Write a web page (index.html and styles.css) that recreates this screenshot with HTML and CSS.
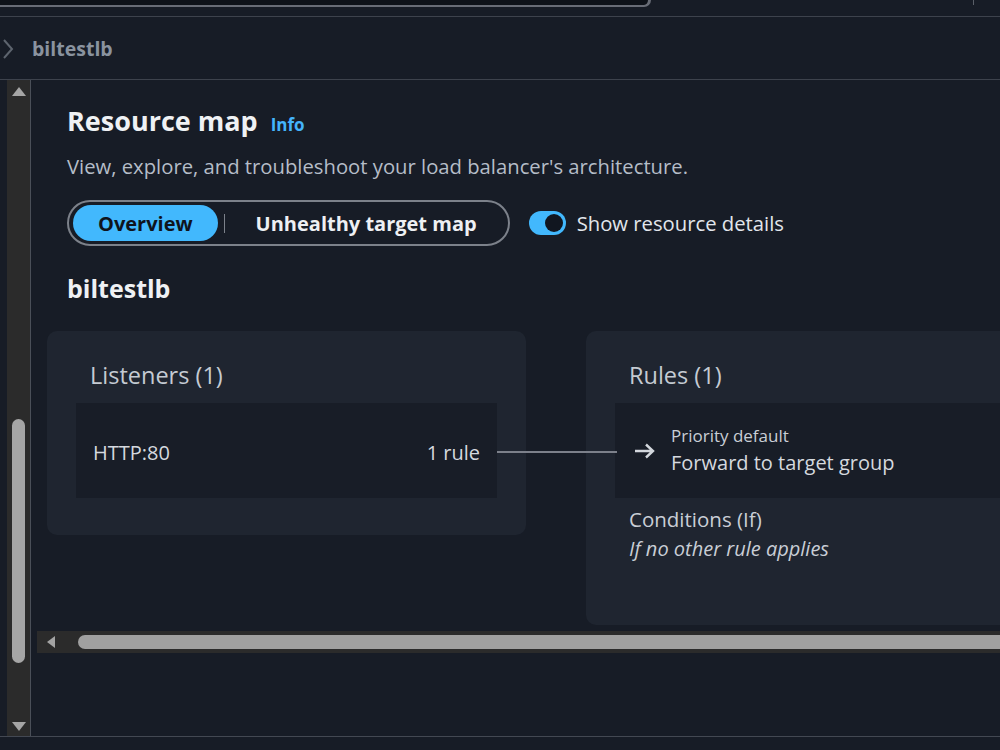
FILE: index.html
```html
<!DOCTYPE html>
<html lang="en">
<head>
    <meta charset="UTF-8">
    <meta name="viewport" content="width=device-width, initial-scale=1.0">
    <title>Resource map - biltestlb</title>
    <link rel="stylesheet" href="styles.css">
</head>
<body>
    <div class="topbar">
        <div class="search-edge"></div>
        <div class="topbar-tick"></div>
    </div>
    <div class="crumb">
        <svg class="crumb-chevron" width="14" height="20" viewBox="0 0 14 20">
            <polyline points="3,1 11,10 3,19" fill="none" stroke="#5d646e" stroke-width="2"/>
        </svg>
        <span class="crumb-name">biltestlb</span>
    </div>
    <div class="main">
        <!-- fake scrollbar of the split panel -->
        <div class="vscroll">
            <div class="vscroll-btn"><span class="tri tri-up"></span></div>
            <div class="vscroll-track"><div class="vscroll-thumb"></div></div>
            <div class="vscroll-btn"><span class="tri tri-down"></span></div>
        </div>
        <div class="content">
            <div class="page-head">
                <h1>Resource map</h1>
                <a class="info-link" href="#">Info</a>
            </div>
            <p class="subtitle">View, explore, and troubleshoot your load balancer's architecture.</p>
            <div class="controls">
                <div class="segmented">
                    <button class="seg seg-active">Overview</button>
                    <span class="seg-divider"></span>
                    <button class="seg">Unhealthy target map</button>
                </div>
                <label class="toggle">
                    <span class="switch"><span class="knob"></span></span>
                    <span>Show resource details</span>
                </label>
            </div>
            <h2 class="lb-name">biltestlb</h2>
            <div class="canvas">
                <div class="nodes">
                    <section class="node node-listeners">
                        <h3>Listeners (1)</h3>
                        <div class="node-row listener-row">
                            <span>HTTP:80</span>
                            <span>1 rule</span>
                        </div>
                    </section>
                    <section class="node node-rules">
                        <h3>Rules (1)</h3>
                        <div class="node-row rule-row">
                            <svg class="rule-arrow" width="22" height="16" viewBox="0 0 22 16">
                                <path d="M1 8 H19 M12 1.5 L19 8 L12 14.5" fill="none" stroke="#d3d7dd" stroke-width="2.4"/>
                            </svg>
                            <div>
                                <div class="rule-priority">Priority default</div>
                                <div class="rule-action">Forward to target group</div>
                            </div>
                        </div>
                        <div class="conditions">
                            <div class="conditions-title">Conditions (If)</div>
                            <div class="conditions-text">If no other rule applies</div>
                        </div>
                    </section>
                </div>
            </div>
            <div class="hscroll">
                <div class="hscroll-btn"><span class="tri tri-left"></span></div>
                <div class="hscroll-thumb"></div>
            </div>
        </div>
    </div>
</body>
</html>
```

FILE: styles.css
```css
body {
    margin: 0;
    background-color: #171c26;
    font-family: "Open Sans", "Noto Sans", sans-serif;
    color: #d5d9df;
    overflow: hidden;
    height: 750px;
}
.topbar {
    height: 16px;
    border-bottom: 1px solid #3d424c;
    position: relative;
}
.search-edge {
    width: 648px;
    height: 5px;
    background-color: #0e1219;
    border-right: 3px solid #686c76;
    border-bottom: 2px solid #686c76;
    border-bottom-right-radius: 9px;
}
.topbar-tick {
    position: absolute;
    left: 973px;
    top: 0;
    width: 1px;
    height: 5px;
    background-color: #5a5f68;
}
.crumb {
    height: 63px;
    border-bottom: 1px solid #3d424c;
    display: flex;
    align-items: center;
    box-sizing: border-box;
    padding-top: 1px;
}
.crumb-chevron {
    margin-left: 1px;
    margin-top: 1px;
}
.crumb-name {
    margin-left: 17px;
    font-size: 19.5px;
    font-weight: 700;
    color: #8a939f;
    line-height: 26px;
}
.main {
    display: flex;
    height: 656px;
    border-bottom: 1px solid #434852;
}
.vscroll {
    margin-left: 7px;
    width: 23px;
    background-color: #2b2b2b;
    border-right: 1px solid #4a4f58;
    display: flex;
    flex-direction: column;
}
.vscroll-btn {
    height: 20px;
    display: flex;
    align-items: center;
    justify-content: center;
}
.vscroll-track {
    flex: 1;
    padding-top: 319px;
}
.vscroll-thumb {
    width: 13px;
    height: 244px;
    margin-left: 5px;
    border-radius: 7px;
    background-color: #a6a6a6;
}
.tri {
    width: 0;
    height: 0;
    display: block;
}
.tri-up {
    border-left: 7px solid transparent;
    border-right: 7px solid transparent;
    border-bottom: 9px solid #a5a5a5;
    margin-top: 2px;
}
.tri-down {
    border-left: 7px solid transparent;
    border-right: 7px solid transparent;
    border-top: 9px solid #a5a5a5;
}
.tri-left {
    border-top: 6px solid transparent;
    border-bottom: 6px solid transparent;
    border-right: 8px solid #a3a3a3;
}
.content {
    flex: 1;
    min-width: 0;
    padding-top: 24px;
}
.page-head {
    display: flex;
    align-items: baseline;
    padding-left: 36px;
}
.page-head h1 {
    margin: 0;
    font-size: 27px;
    line-height: 34px;
    font-weight: 700;
    color: #eff1f4;
}
.info-link {
    margin-left: 13px;
    font-size: 17px;
    font-weight: 700;
    color: #44b4fc;
    text-decoration: none;
}
.subtitle {
    margin: 14px 0 0;
    padding-left: 36px;
    font-size: 20.25px;
    line-height: 28px;
    color: #b5bdc8;
}
.controls {
    display: flex;
    align-items: center;
    margin-top: 20px;
    padding-left: 36px;
}
.segmented {
    display: flex;
    align-items: center;
    border: 2px solid #7c818a;
    border-radius: 24px;
    padding: 3px 4px;
}
.seg {
    font-family: inherit;
    font-size: 20px;
    font-weight: 700;
    height: 36px;
    padding: 0 25px;
    border: none;
    border-radius: 18px;
    background: none;
    color: #eef0f3;
    cursor: pointer;
}
.seg + .seg-divider + .seg {
    padding-right: 27px;
}
.seg-active {
    background-color: #42b8fd;
    color: #0f141c;
}
.seg-divider {
    width: 1px;
    height: 19px;
    margin: 0 6px;
    background-color: #7c818a;
}
.toggle {
    display: flex;
    align-items: center;
    margin-left: 19px;
    font-size: 20.25px;
    color: #e2e6ec;
}
.switch {
    position: relative;
    width: 37px;
    height: 24px;
    border-radius: 12px;
    background-color: #42b8fd;
    margin-right: 11px;
}
.knob {
    position: absolute;
    right: 3px;
    top: 3px;
    width: 18px;
    height: 18px;
    border-radius: 50%;
    background-color: #111620;
}
.lb-name {
    margin: 26px 0 0;
    padding-left: 36px;
    font-size: 25px;
    line-height: 32px;
    font-weight: 700;
    color: #eff1f4;
}
.canvas {
    margin: 17px 0 0 6px;
    padding: 10px 0 6px 10px;
    overflow: hidden;
}
.nodes {
    display: flex;
    align-items: flex-start;
    gap: 60px;
    width: 1100px;
}
.node {
    background-color: #1f2530;
    border-radius: 10px;
    padding: 29px 29px 37px;
}
.node-listeners {
    width: 421px;
}
.node-rules {
    width: 460px;
    padding-bottom: 60px;
}
.node h3 {
    margin: 0 0 13px;
    padding-left: 14px;
    font-size: 23.5px;
    line-height: 30px;
    font-weight: 400;
    color: #c5cbd3;
}
.node-row {
    height: 95px;
    display: flex;
    align-items: center;
    background-color: #181d27;
    font-size: 20px;
    color: #d5d9df;
}
.listener-row {
    justify-content: space-between;
    padding: 0 17px;
    position: relative;
}
/* edge to the rules node */
.listener-row::after {
    content: '';
    position: absolute;
    left: 100%;
    top: 48px;
    width: 120px;
    height: 2px;
    background-color: #7c808a;
}
.listener-row span {
    margin-top: 3px;
}
.rule-row {
    padding-left: 19px;
}
.rule-arrow {
    margin-right: 15px;
    margin-top: 1px;
}
.rule-priority {
    font-size: 17px;
    line-height: 24px;
    color: #c9ced6;
}
.rule-action {
    font-size: 20px;
    line-height: 30px;
    color: #d5d9df;
}
.conditions {
    padding: 7px 0 0 14px;
}
.conditions-title {
    font-size: 20.5px;
    line-height: 28px;
    color: #c9ced6;
}
.conditions-text {
    font-size: 20px;
    line-height: 32px;
    font-style: italic;
    color: #c9ced6;
}
.hscroll {
    margin-left: 6px;
    height: 22px;
    background-color: #2b2b2b;
    display: flex;
    align-items: center;
}
.hscroll-btn {
    width: 20px;
    display: flex;
    justify-content: center;
    margin-left: 4px;
}
.hscroll-thumb {
    flex: 1;
    height: 14px;
    margin-left: 17px;
    border-radius: 7px 0 0 7px;
    background-color: #a0a0a0;
}
```
